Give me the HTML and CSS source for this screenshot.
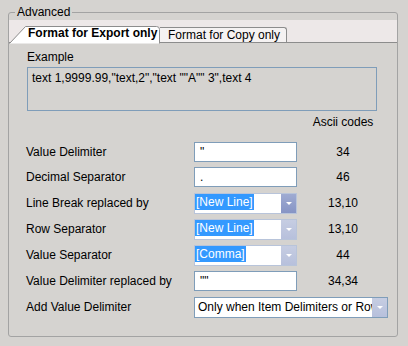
FILE: index.html
```html
<!DOCTYPE html>
<html>
<head>
<meta charset="utf-8">
<link rel="stylesheet" href="styles.css">
</head>
<body>
<div class="group">
  <span class="legend">Advanced</span>
  <div class="tabbar">
    <div class="tab tab-active">
      <svg class="tab-shape" width="151" height="18" viewBox="0 0 151 18"><path d="M0.5 17.5 L16.5 0.5 L147.5 0.5 Q150.5 0.5 150.5 3.5 L150.5 17.5" fill="#ffffff" stroke="#8c8c8c"/></svg>
      <span class="tab-text">Format for Export only</span>
    </div>
    <div class="tab tab-inactive">Format for Copy only</div>
  </div>
  <div class="page">
    <div class="caption">Example</div>
    <div class="example">text 1,9999.99,"text,2","text ""A"" 3",text 4</div>
    <div class="grid">
      <div></div><div></div><div class="head">Ascii codes</div>

      <div class="lbl">Value Delimiter</div>
      <div class="edit">"</div>
      <div class="code">34</div>

      <div class="lbl">Decimal Separator</div>
      <div class="edit">.</div>
      <div class="code">46</div>

      <div class="lbl">Line Break replaced by</div>
      <div class="combo"><span class="sel">[New Line]</span><span class="btn btn-hot"><i></i></span></div>
      <div class="code">13,10</div>

      <div class="lbl">Row Separator</div>
      <div class="combo"><span class="sel">[New Line]</span><span class="btn"><i></i></span></div>
      <div class="code">13,10</div>

      <div class="lbl">Value Separator</div>
      <div class="combo"><span class="sel">[Comma]</span><span class="btn"><i></i></span></div>
      <div class="code">44</div>

      <div class="lbl">Value Delimiter replaced by</div>
      <div class="edit">""</div>
      <div class="code">34,34</div>

      <div class="lbl">Add Value Delimiter</div>
      <div class="combo combo-wide"><span class="plain">Only when Item Delimiters or Row Delimiters are in value</span><span class="btn"><i></i></span></div>
    </div>
  </div>
</div>
</body>
</html>
```

FILE: styles.css
```css
html, body {
  margin: 0;
  padding: 0;
}
body {
  width: 408px;
  height: 346px;
  background: #d5d3d0;
  font-family: "Liberation Sans", Arial, sans-serif;
  font-size: 12px;
  color: #000;
  overflow: hidden;
}
.group {
  position: relative;
  box-sizing: border-box;
  width: 390px;
  height: 325px;
  margin: 12px 0 0 8px;
  border: 1px solid #a3a3a3;
  border-radius: 3px;
  padding-top: 7px;
}
.legend {
  position: absolute;
  top: -9px;
  left: 6px;
  padding: 0 2px;
  line-height: 16px;
  background: #d5d3d0;
}
.tabbar {
  display: flex;
  align-items: flex-end;
  height: 22px;
  background: #ede8e8;
  border-bottom: 1px solid #8c8c8c;
}
.tab {
  box-sizing: border-box;
  line-height: 15px;
}
.tab-active {
  position: relative;
  width: 151px;
  height: 17px;
  margin-bottom: -1px;
  padding-left: 19px;
  font-weight: bold;
}
.tab-shape {
  position: absolute;
  left: 0;
  top: 0;
}
.tab-text {
  position: relative;
}
.tab-inactive {
  height: 15px;
  width: 127px;
  padding-left: 8px;
  background: #f5f2f2;
  border: 1px solid #8c8c8c;
  border-bottom: none;
  border-left: none;
  border-radius: 0 3px 0 0;
}
.page {
  padding: 6px 0 0 17px;
}
.caption {
  line-height: 16px;
  padding-left: 1px;
}
.example {
  box-sizing: border-box;
  width: 350px;
  height: 44px;
  margin-top: 2px;
  margin-left: 1px;
  padding: 2px 0 0 4px;
  line-height: 16px;
  border: 1px solid #7f9db9;
}
.grid {
  display: grid;
  grid-template-columns: 168px 103px 92px;
  grid-template-rows: 27px 25px repeat(6, 26px);
  margin-top: 3px;
  align-items: start;
}
.head {
  line-height: 16px;
  text-align: center;
}
.lbl {
  line-height: 22px;
}
.code {
  line-height: 22px;
  text-align: center;
}
.edit {
  box-sizing: border-box;
  height: 20px;
  margin-top: 1px;
  padding-left: 5px;
  line-height: 18px;
  background: #fff;
  border: 1px solid #7f9db9;
}
.combo {
  box-sizing: border-box;
  display: flex;
  height: 21px;
  margin-top: 1px;
  border: 1px solid #b8c4da;
  background: #fff;
  overflow: hidden;
}
.combo-wide {
  grid-column: 2 / span 2;
  width: 194px;
  border-color: #7f9db9;
}
.sel {
  align-self: flex-start;
  height: 16px;
  line-height: 16px;
  padding: 0 1px;
  background: #3399ff;
  color: #fff;
}
.plain {
  flex: 1;
  min-width: 0;
  white-space: nowrap;
  overflow: hidden;
  padding-left: 3px;
  line-height: 19px;
}
.combo .sel + .btn {
  margin-left: auto;
}
.btn {
  flex: none;
  display: flex;
  align-items: center;
  justify-content: center;
  width: 15px;
  height: 19px;
  background: linear-gradient(#c6cde2, #b7c0dc);
}
.btn-hot {
  background: linear-gradient(#9fabd2, #8694c5);
}
.btn i {
  display: block;
  width: 0;
  height: 0;
  border-left: 3px solid transparent;
  border-right: 3px solid transparent;
  border-top: 3px solid #fff;
}
```
